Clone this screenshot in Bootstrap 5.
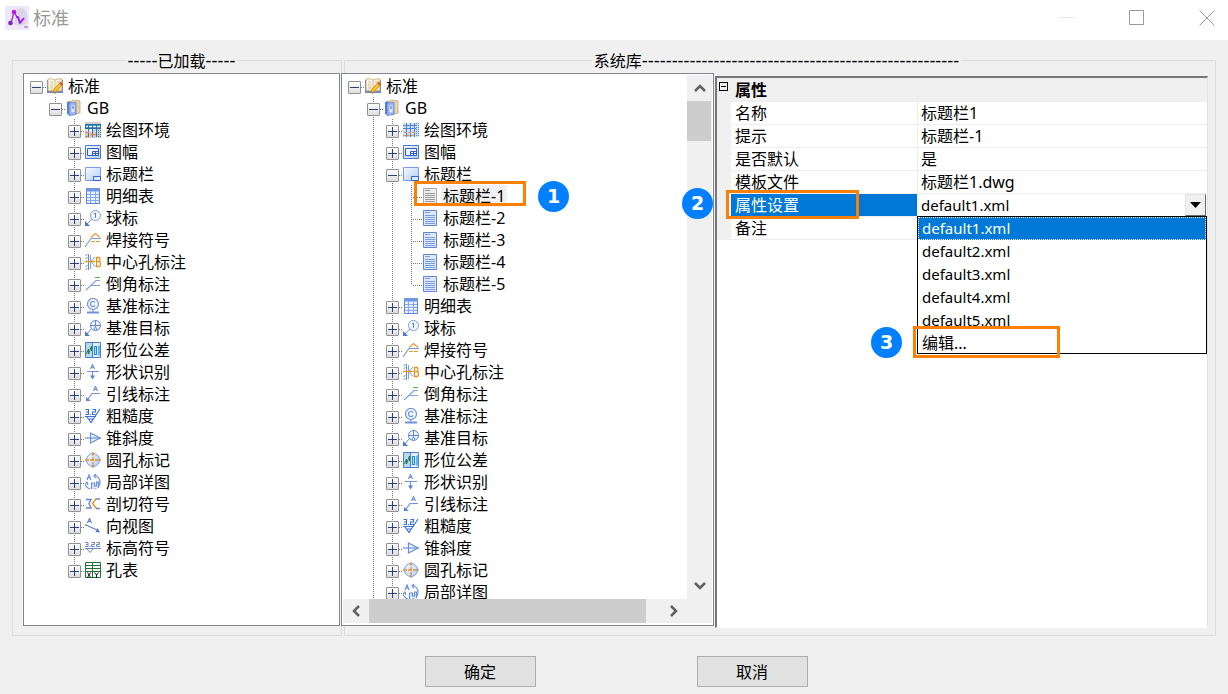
<!DOCTYPE html>
<html lang="zh-CN">
<head>
<meta charset="utf-8">
<meta name="viewport" content="width=device-width, initial-scale=1">
<title>标准</title>
<link href="https://cdn.jsdelivr.net/npm/bootstrap@5.3.0/dist/css/bootstrap.min.css" rel="stylesheet">
<style>
body{background:#f0f0f0;color:#000;font:16px/22px "Noto Sans","Noto Sans CJK SC",sans-serif}
.titlebar{height:40px;padding:0 13px 5px 5px;color:#999;font-size:18px}
.titlebar button,.scroll-btn{background:none;border:0;padding:0}
.titlebar svg,.scroll-btn svg{display:block}
.win-controls{gap:54px}
.stage{padding:8px 12px 0;gap:2px;display:grid;grid-template:minmax(0,1fr) / minmax(0,330fr) minmax(0,872fr)}
.group{border:1px solid #dcdcdc;margin:0}
.group legend{float:none;width:auto;margin:0 auto;padding:2px 2px 0;font-size:16px;line-height:22px;white-space:nowrap}
.dashes{font:18px/22px "Liberation Sans",sans-serif}
.group-loaded{padding:1px 1px 9px 10px}
.group-library{padding:1px 7px 7px 0}
.panes{margin-left:-4px;gap:1px;min-height:0;display:grid;grid-template:minmax(0,1fr) / minmax(0,373fr) minmax(0,493fr)}
.tree-box{background:#fff;border:1px solid #828790}
.library-box{margin-bottom:2px;display:grid;grid-template:minmax(0,1fr) 24px / minmax(0,1fr) 25px;padding:1px 1px 2px 1px}
.tree,.tree ul{list-style:none;margin:0;padding:0}
.tree{padding:1px 0 0 6px;overflow:hidden;min-height:0}
.library-box .tree{padding:0 0 0 5px}
.tree ul{padding-left:19px}
.tree li{position:relative;white-space:nowrap}
.tree ul>li::before{content:"";position:absolute;left:6px;top:0;bottom:0;width:1px;background:repeating-linear-gradient(#777 0 1px,transparent 1px 2px)}
.tree ul>li:last-child:not(.continues)::before{bottom:auto;height:11px}
.node{display:flex;align-items:center;height:22px;position:relative;background:repeating-linear-gradient(90deg,#777 0 1px,transparent 1px 2px) 13px 12px/4px 1px no-repeat}
.node svg{width:16px;height:16px;flex:none;margin-right:3px}
.node span{padding:0 2px}
.leaf{padding-left:17px;background:repeating-linear-gradient(90deg,#777 0 1px,transparent 1px 2px) 8px 12px/9px 1px no-repeat}
.leaf .picked{background:#f0f0f0}
.twist{width:13px;height:13px;flex:none;margin:2px 4px 0 0;padding:0;border:1px solid #919191;border-radius:1px;background:linear-gradient(#27427f,#27427f) center/9px 1px no-repeat,linear-gradient(#fff,#dedede)}
.twist.closed{background:linear-gradient(#27427f,#27427f) center/9px 1px no-repeat,linear-gradient(#27427f,#27427f) center/1px 9px no-repeat,linear-gradient(#fff,#dedede)}
.bar{background:#f0f0f0}
.bar-x{display:flex}.bar-y{display:flex;flex-direction:column}
.scroll-btn{flex:none;width:25px;height:26px;display:grid;place-items:center}
.bar-x .scroll-btn{width:26px;height:24px}
.thumb{background:#cdcdcd}
.bar-x .thumb{width:95%}.bar-y .thumb{height:40px;width:24px}
.props{margin-top:3px;background:#fff;border:2px solid;border-color:#777 #e3e3e3 #fff #777;border-right-width:1px;border-bottom-width:1px}
.props table{width:100%;table-layout:fixed;border-collapse:separate;border-spacing:0}
.props th,.props td{height:23px;line-height:22px;padding:0 0 0 4px;border-bottom:1px solid #eee;font-weight:400;white-space:nowrap;position:relative}
.props td:last-child{padding-left:3px}
.props .gutter{background:#f0f0f0;padding:0}
.props tbody th{border-right:1px solid #eee}
.props thead th{height:24px;background:#f0f0f0;font-weight:700}
.props thead .gutter{vertical-align:top}
.c-gutter{width:14px}.c-name{width:187px}
.mini{display:block;width:9px;height:9px;margin:4px 0 0 2px;padding:0;border:1px solid #000;background:linear-gradient(#000,#000) center/5px 1px no-repeat}
.props .chosen{background:#0078d7;color:#fff}
.combo{display:block;width:100%;height:22px;border:0;padding:0;background:#fff;color:#000;appearance:none;font-size:15px;line-height:22px}
.combo-arrow{position:absolute;right:1px;top:0;width:21px;height:22px;background:#f0f0f0;border:1px solid;border-color:#e3e3e3 #696969 #696969 #e3e3e3;pointer-events:none;display:grid;place-items:center}
.choices{position:absolute;z-index:3;top:22px;left:-1px;right:0;border:1px solid #000;background:#fff}
.choices button{display:block;width:100%;height:23px;border:0;padding:0 0 0 4px;background:none;color:#000;text-align:left;line-height:23px;font-size:15px}
.choices .active{background:#0078d7;color:#fff;outline:1px dotted #fff;outline-offset:-1px}
.choices .edit{height:21px;font-size:16px;position:relative}
.frame{position:absolute;border:3px solid #ff8000;z-index:4;pointer-events:none}
.step{position:absolute;z-index:5;width:31px;height:31px;border-radius:50%;background:#0080ff;color:#fff;font:700 19px/31px "DejaVu Sans",sans-serif;text-align:center}
.frame-1{left:9px;top:-4px;width:112px;height:25px}.step-1{left:133px;top:-4px}
.frame-2{left:-5px;top:-4px;width:133px;height:29px}.step-2{left:-49px;top:-6px}
.frame-3{left:-5px;top:-6px;width:147px;height:32px}.step-3{left:-47px;top:-5px}
.actions{padding:20px 0 7px 4px;gap:161px}
.actions button{width:111px;height:31px;padding:0;border:1px solid #adadad;background:#e1e1e1;color:#000}
</style>
</head>
<body class="vh-100 d-flex flex-column overflow-hidden">
<svg width="0" height="0" class="position-absolute" aria-hidden="true">
<defs>
<linearGradient id="g" x2="1" y2="1"><stop stop-color="#f7faff"/><stop offset="1" stop-color="#b5ccf8"/></linearGradient>
<linearGradient id="gy" x2="1" y2="1"><stop stop-color="#fffdf5"/><stop offset="1" stop-color="#eedcb4"/></linearGradient>
</defs>
<symbol id="book" viewBox="0 0 16 16"><path d="M0 2h16v13H9l-1 1-1-1H0z" fill="#6c86c4"/><path d="M1 1q4-1 7 1 3-2 7-1v12q-4-1-7 1-3-2-7-1z" fill="url(#gy)" stroke="#c3a36a" stroke-width=".8"/><path d="M8 2v11M3 4h3M3 6h3M3 8h3M3 10h3M10 4h3" stroke="#cbb78e" stroke-width=".7"/><path d="M13.500 4l2.500 2-7 7.500-3 1.500.8-3.500z" fill="#ffc524" stroke="#a87400" stroke-width=".7"/><path d="M13.500 4l2.500 2-1.500 1.500-2.400-2z" fill="#d85a3a"/></symbol>
<symbol id="folder" viewBox="0 0 16 16"><path d="M4 1.500L9 0l5 1v12l-4 1z" fill="#e9d6b0" stroke="#b59a6d" stroke-width=".7"/><path d="M1 2l3-1v14l-3-1z" fill="#5b7fdb"/><path d="M3 3l7-.5v12L3 15.500z" fill="#9dbbf4" stroke="#4c71c9" stroke-width=".7"/><path d="M5 5l4-.5v8L5 13z" fill="#dce8ff" stroke="#7f9fe6" stroke-width=".6"/><path d="M7 6v3" stroke="#3a66c8"/></symbol>
<symbol id="env" viewBox="0 0 16 16"><path fill="#cfe0fa" d="M0 1h16v14H0z"/><path d="M0 3.500h13M0 6.500h13M3.500 1v14M7.500 1v14M11.500 1v14" stroke="#5580d8"/><path d="M1 10.500h11M0 13.500h12" stroke="#e39a58" stroke-dasharray="3 1"/><path d="M15.500 1v14M13.500 1v14" stroke="#5582d8" stroke-dasharray="1 1"/></symbol>
<symbol id="env2" viewBox="0 0 16 16"><path fill="#d3d1cf" d="M0 0h16v16H0z"/><path fill="#2070a8" d="M0 2h16v5H0z"/><path d="M1 4.500h2m1 0h3m1 0h3m1 0h3M1 8.500h2m1 0h3" stroke="#fff" stroke-width="1.300"/><path d="M3.500 2v13M7.500 2v13M11.500 2v13" stroke="#2878b0"/><path d="M0 10.500h4M5 12.500h6M0 14.500h3" stroke="#f18358" stroke-width="1.500"/><path d="M13.500 8v8M15.500 8v8" stroke="#2878b0" stroke-dasharray="1 1"/></symbol>
<symbol id="sheet" viewBox="0 0 16 16"><path d="M.5 1.500h15v13H.5z" fill="url(#g)" stroke="#4d78d0"/><path d="M2.500 4.500h11v7h-11z" fill="#edf3ff" stroke="#2f5fc0"/><path d="M7.500 11.500v-4h6M7.500 9.500h6M10.500 7.500v4" stroke="#2f5fc0" fill="none"/></symbol>
<symbol id="titleblk" viewBox="0 0 16 16"><path d="M.5 1.500h15v13H.5z" fill="url(#g)" stroke="#789ce6"/><path d="M8.500 14.500v-4h7v4z" fill="#dce8ff" stroke="#3264c9"/></symbol>
<symbol id="bom" viewBox="0 0 16 16"><path d="M1.500.5h13v15h-13z" fill="#e8f0ff" stroke="#5a83dc"/><path fill="#6f94e6" d="M1 0h14v3.500H1z"/><path d="M2 6.500h12M2 9.500h12M2 12.500h12M5.500 3v12M10.500 3v12" stroke="#89a8ea"/></symbol>
<symbol id="balloon" viewBox="0 0 16 16" fill="none" stroke="#7b9be0"><circle cx="10.500" cy="5.500" r="5" fill="#f4f8ff"/><path d="M9 4l1.500-1v5" stroke="#5b82d4"/><path d="M7 9l-5 5"/><path d="M0 11v5h5z" fill="#4e78cc" stroke="none"/></symbol>
<symbol id="weld" viewBox="0 0 16 16" fill="none" stroke-width="1.200"><path d="M0 15l6-8.500h10" stroke="#7d9de2"/><path d="M6 5.500l4.500-4 4.500 4M6 9.500h4m1 0h4" stroke="#e69b37"/></symbol>
<symbol id="center" viewBox="0 0 16 16" fill="none"><path d="M.5 1.500l2-1m-2 4l2-1m-2 9l2-1m-2 4l2-1M3.500 0v16" stroke="#6489d8"/><path d="M5.500 1v14M10 3L6 7.500l4 5" stroke="#7fa0df"/><path d="M0 7.500h10M11.500 3.500H14q1 0 1 2t-1 2h-2.500H14q1.500 0 1.500 2.500T14 12.500h-2.500z" stroke="#e8931b" stroke-width="1.300"/></symbol>
<symbol id="chamfer" viewBox="0 0 16 16" fill="none"><path d="M1 14L11 4.500h4M6 9.500h9" stroke="#839fe0" stroke-width="1.200"/><path d="M10 1.500h5" stroke="#4fb53c"/></symbol>
<symbol id="datum" viewBox="0 0 16 16" fill="none" stroke="#6f92dc" stroke-width="1.200"><circle cx="8" cy="6" r="5.500" fill="#f1f6ff"/><path d="M10 4.500q-1-1-2-1-2.500 0-2.500 2.500T8 8.500q1 0 2-1M8 12v3"/><path d="M2 14.500h12" stroke-width="2"/></symbol>
<symbol id="target" viewBox="0 0 16 16" fill="none" stroke="#5f86d6"><circle cx="10.500" cy="5.500" r="5" fill="#eef4ff"/><path d="M5.500 5.500h10M10.500 0v5M9 10l1.500-3.500L12 10M6 9l-4 5"/><path d="M0 11v5h5z" fill="#4e78cc" stroke="none"/></symbol>
<symbol id="tol" viewBox="0 0 16 16" fill="none"><path d="M.5.500h15v15H.5z" fill="#e4f0ff" stroke="#4d7fd0"/><path fill="#b5d7ef" d="M1 1h6v14H1z"/><path d="M7.500 1v14" stroke="#4d7fd0"/><path d="M1.500 12l2-5v5l3-8v5" stroke="#257d47"/><path d="M9.500 4.500v8h2v-8zM14 3.500v10" stroke="#168eea" stroke-width="1.200"/></symbol>
<symbol id="shape" viewBox="0 0 16 16" fill="none" stroke="#6f92d8"><path d="M5.500 5L7.500.5l2 4.500M6 3.500h3M2 7.500h12M7.500 8v5" stroke-width="1.200"/><path d="M5 11.500l2.500 4 2.500-4z" fill="#5d84d0" stroke="none"/></symbol>
<symbol id="leader" viewBox="0 0 16 16" fill="none" stroke="#6f92d8"><path d="M8.500 5l2-4.500 2 4.500M9 3.500h3M15 7.500H7L3 13" stroke-width="1.200"/><path d="M1 11v4h5z" fill="#5d84d0" stroke="none"/></symbol>
<symbol id="rough" viewBox="0 0 16 16" fill="none" stroke="#356fd3" stroke-width="1.100"><path d="M.5 1.500h3v5h-3M1 4h2.500M5.500 6v1M7.500 1.500h3V4h-3v2.500h3M0 8.500h11M2 9l4 5.500L15 1M4 11h4"/></symbol>
<symbol id="taper" viewBox="0 0 16 16" fill="none" stroke="#6b90dc" stroke-width="1.200"><path d="M5.500 3v10L15 8z" fill="#eef4ff"/><path d="M0 8h16"/></symbol>
<symbol id="hole" viewBox="0 0 16 16" fill="none"><circle cx="8" cy="8" r="6.500" fill="url(#g)" stroke="#7799df"/><path d="M8 0v16M0 8h16" stroke="#ec9324" stroke-width="1.300" stroke-dasharray="4 1"/></symbol>
<symbol id="detail" viewBox="0 0 16 16" fill="none" stroke="#6b90d8" stroke-width="1.200"><path d="M2 6l2-5 2 5M3 4h2M9 1q6 2 6 7t-6 7M0 9q0 4 5 6M11 0L9 2l2 2M0 10l2-2 1 3"/><path d="M6.500 15V9h3v3h2V8h2v6" fill="#d9e7ff"/></symbol>
<symbol id="section" viewBox="0 0 16 16" fill="none" stroke-width="1.400"><path d="M1 3.500h5L4 7.500l2 4.500H1" stroke="#6188cf"/><path d="M11 2.500L7.500 7.500l4 5" stroke="#e89227"/><path d="M11 3h4M11 12.500h4" stroke="#6188cf"/></symbol>
<symbol id="view" viewBox="0 0 16 16" fill="none" stroke="#5d84cc" stroke-width="1.200"><path d="M2.500 5l2-4.500 2 4.500M3 3.500h3M0 6.500l12 5.500"/><path d="M10.500 14l2-4 2.500 4.500z" fill="#5079c4" stroke="none"/></symbol>
<symbol id="level" viewBox="0 0 16 16" fill="none" stroke="#6c86c6"><path d="M0 2.500h3v4H0m1-2h2M5 6v1M6.500 2.500h3v2h-3v2h3M11.500 2.500h3v2h-3v2H15M0 8.500h16M2 9l3 3.500L8 9"/></symbol>
<symbol id="holetab" viewBox="0 0 16 16" fill="none"><path d="M.5.500h15v15H.5zM0 3.500h16M0 6.500h16M0 9.500h16M7.500 0v16" stroke="#1d7335"/><path d="M2.500 10.500l3 5m0-5l-3 5M9.500 10.500l2 2.500 2-2.500m-2 2v3" stroke="#000" stroke-width=".9"/></symbol>
<symbol id="page" viewBox="0 0 16 16"><path d="M1.500.5h13v15h-13z" fill="#dce8ff" stroke="#6085d6"/><path d="M3 2.500h5M3 5.500h10M3 7.500h10M3 9.500h10M3 11.500h10M3 13.500h10" stroke="#7d9ce0"/></symbol>
<symbol id="pagegray" viewBox="0 0 16 16"><path d="M1.500.5h13v15h-13z" fill="#eee" stroke="#aaa"/><path d="M3 2.500h5M3 5.500h10M3 7.500h10M3 9.500h10M3 11.500h10M3 13.500h10" stroke="#999"/></symbol>
</svg>

<header class="titlebar bg-white d-flex align-items-center justify-content-between flex-shrink-0">
  <div class="d-flex align-items-center">
    <svg class="me-1" width="24" height="24" viewBox="0 0 24 24" aria-hidden="true"><rect width="24" height="24" fill="#ece8f7"/><path d="M12 3q8-3 10 5v9q-7 5-13 0z" fill="#d9d6ec"/><path d="M9 6L6 17M9 6l3 5" stroke="#a321cf" stroke-width="1.300"/><circle cx="9" cy="6" r="2.300" fill="#b11fdc"/><circle cx="5.500" cy="17" r="2.300" fill="#7e24c3"/><path d="M11 11h2l2 6 4-5" fill="none" stroke="#a11be0" stroke-width="2" stroke-linejoin="round"/><path d="M19 21h4" stroke="#c57ee0" stroke-width="1.500"/></svg>
    <span>标准</span>
  </div>
  <div class="win-controls d-flex">
    <button type="button" aria-label="最小化"><svg width="16" height="16"><path d="M0 7.500h16" stroke="#e6e6e6"/></svg></button>
    <button type="button" aria-label="最大化"><svg width="16" height="16"><path d="M.5.500h14v14H.5z" fill="none" stroke="#999"/></svg></button>
    <button type="button" aria-label="关闭"><svg width="16" height="16"><path d="M.5.500l15 15m0-15l-15 15" stroke="#999"/></svg></button>
  </div>
</header>

<main class="stage flex-fill overflow-hidden">
  <fieldset class="group group-loaded d-flex flex-column">
    <legend><span class="dashes">-----</span>已加载<span class="dashes">-----</span></legend>
    <div class="tree-box flex-fill overflow-hidden">
      <ul class="tree">
        <li><div class="node"><button class="twist" aria-label="折叠"></button><svg><use href="#book"/></svg><span>标准</span></div>
        <ul><li><div class="node"><button class="twist" aria-label="折叠"></button><svg><use href="#folder"/></svg><span>GB</span></div>
        <ul>
          <li><div class="node"><button class="twist closed" aria-label="展开"></button><svg><use href="#env2"/></svg><span>绘图环境</span></div></li>
          <li><div class="node"><button class="twist closed" aria-label="展开"></button><svg><use href="#sheet"/></svg><span>图幅</span></div></li>
          <li><div class="node"><button class="twist closed" aria-label="展开"></button><svg><use href="#titleblk"/></svg><span>标题栏</span></div></li>
          <li><div class="node"><button class="twist closed" aria-label="展开"></button><svg><use href="#bom"/></svg><span>明细表</span></div></li>
          <li><div class="node"><button class="twist closed" aria-label="展开"></button><svg><use href="#balloon"/></svg><span>球标</span></div></li>
          <li><div class="node"><button class="twist closed" aria-label="展开"></button><svg><use href="#weld"/></svg><span>焊接符号</span></div></li>
          <li><div class="node"><button class="twist closed" aria-label="展开"></button><svg><use href="#center"/></svg><span>中心孔标注</span></div></li>
          <li><div class="node"><button class="twist closed" aria-label="展开"></button><svg><use href="#chamfer"/></svg><span>倒角标注</span></div></li>
          <li><div class="node"><button class="twist closed" aria-label="展开"></button><svg><use href="#datum"/></svg><span>基准标注</span></div></li>
          <li><div class="node"><button class="twist closed" aria-label="展开"></button><svg><use href="#target"/></svg><span>基准目标</span></div></li>
          <li><div class="node"><button class="twist closed" aria-label="展开"></button><svg><use href="#tol"/></svg><span>形位公差</span></div></li>
          <li><div class="node"><button class="twist closed" aria-label="展开"></button><svg><use href="#shape"/></svg><span>形状识别</span></div></li>
          <li><div class="node"><button class="twist closed" aria-label="展开"></button><svg><use href="#leader"/></svg><span>引线标注</span></div></li>
          <li><div class="node"><button class="twist closed" aria-label="展开"></button><svg><use href="#rough"/></svg><span>粗糙度</span></div></li>
          <li><div class="node"><button class="twist closed" aria-label="展开"></button><svg><use href="#taper"/></svg><span>锥斜度</span></div></li>
          <li><div class="node"><button class="twist closed" aria-label="展开"></button><svg><use href="#hole"/></svg><span>圆孔标记</span></div></li>
          <li><div class="node"><button class="twist closed" aria-label="展开"></button><svg><use href="#detail"/></svg><span>局部详图</span></div></li>
          <li><div class="node"><button class="twist closed" aria-label="展开"></button><svg><use href="#section"/></svg><span>剖切符号</span></div></li>
          <li><div class="node"><button class="twist closed" aria-label="展开"></button><svg><use href="#view"/></svg><span>向视图</span></div></li>
          <li><div class="node"><button class="twist closed" aria-label="展开"></button><svg><use href="#level"/></svg><span>标高符号</span></div></li>
          <li><div class="node"><button class="twist closed" aria-label="展开"></button><svg><use href="#holetab"/></svg><span>孔表</span></div></li>
        </ul></li></ul></li>
      </ul>
    </div>
  </fieldset>

  <fieldset class="group group-library d-flex flex-column">
    <legend>系统库<span class="dashes">-----------------------------------------------------</span></legend>
    <div class="panes flex-fill">
      <div class="tree-box library-box">
        <ul class="tree">
          <li><div class="node"><button class="twist" aria-label="折叠"></button><svg><use href="#book"/></svg><span>标准</span></div>
          <ul><li class="continues"><div class="node"><button class="twist" aria-label="折叠"></button><svg><use href="#folder"/></svg><span>GB</span></div>
          <ul>
            <li><div class="node"><button class="twist closed" aria-label="展开"></button><svg><use href="#env"/></svg><span>绘图环境</span></div></li>
            <li><div class="node"><button class="twist closed" aria-label="展开"></button><svg><use href="#sheet"/></svg><span>图幅</span></div></li>
            <li><div class="node"><button class="twist" aria-label="折叠"></button><svg><use href="#titleblk"/></svg><span>标题栏</span></div>
            <ul>
              <li><div class="node leaf"><svg><use href="#pagegray"/></svg><span class="picked">标题栏-1</span><i class="frame frame-1"></i><b class="step step-1">1</b></div></li>
              <li><div class="node leaf"><svg><use href="#page"/></svg><span>标题栏-2</span></div></li>
              <li><div class="node leaf"><svg><use href="#page"/></svg><span>标题栏-3</span></div></li>
              <li><div class="node leaf"><svg><use href="#page"/></svg><span>标题栏-4</span></div></li>
              <li><div class="node leaf"><svg><use href="#page"/></svg><span>标题栏-5</span></div></li>
            </ul></li>
            <li><div class="node"><button class="twist closed" aria-label="展开"></button><svg><use href="#bom"/></svg><span>明细表</span></div></li>
            <li><div class="node"><button class="twist closed" aria-label="展开"></button><svg><use href="#balloon"/></svg><span>球标</span></div></li>
            <li><div class="node"><button class="twist closed" aria-label="展开"></button><svg><use href="#weld"/></svg><span>焊接符号</span></div></li>
            <li><div class="node"><button class="twist closed" aria-label="展开"></button><svg><use href="#center"/></svg><span>中心孔标注</span></div></li>
            <li><div class="node"><button class="twist closed" aria-label="展开"></button><svg><use href="#chamfer"/></svg><span>倒角标注</span></div></li>
            <li><div class="node"><button class="twist closed" aria-label="展开"></button><svg><use href="#datum"/></svg><span>基准标注</span></div></li>
            <li><div class="node"><button class="twist closed" aria-label="展开"></button><svg><use href="#target"/></svg><span>基准目标</span></div></li>
            <li><div class="node"><button class="twist closed" aria-label="展开"></button><svg><use href="#tol"/></svg><span>形位公差</span></div></li>
            <li><div class="node"><button class="twist closed" aria-label="展开"></button><svg><use href="#shape"/></svg><span>形状识别</span></div></li>
            <li><div class="node"><button class="twist closed" aria-label="展开"></button><svg><use href="#leader"/></svg><span>引线标注</span></div></li>
            <li><div class="node"><button class="twist closed" aria-label="展开"></button><svg><use href="#rough"/></svg><span>粗糙度</span></div></li>
            <li><div class="node"><button class="twist closed" aria-label="展开"></button><svg><use href="#taper"/></svg><span>锥斜度</span></div></li>
            <li><div class="node"><button class="twist closed" aria-label="展开"></button><svg><use href="#hole"/></svg><span>圆孔标记</span></div></li>
            <li><div class="node"><button class="twist closed" aria-label="展开"></button><svg><use href="#detail"/></svg><span>局部详图</span></div></li>
          </ul></li></ul></li>
        </ul>
        <div class="bar bar-y">
          <button class="scroll-btn" aria-label="向上滚动"><svg width="14" height="10"><path d="M2 8l5-5 5 5" fill="none" stroke="#606060" stroke-width="2.500"/></svg></button>
          <div class="flex-fill"><div class="thumb"></div></div>
          <button class="scroll-btn" aria-label="向下滚动"><svg width="14" height="10"><path d="M2 2l5 5 5-5" fill="none" stroke="#606060" stroke-width="2.500"/></svg></button>
        </div>
        <div class="bar bar-x">
          <button class="scroll-btn" aria-label="向左滚动"><svg width="10" height="14"><path d="M8 2L3 7l5 5" fill="none" stroke="#606060" stroke-width="2.500"/></svg></button>
          <div class="flex-fill d-flex"><div class="thumb"></div></div>
          <button class="scroll-btn" aria-label="向右滚动"><svg width="10" height="14"><path d="M2 2l5 5-5 5" fill="none" stroke="#606060" stroke-width="2.500"/></svg></button>
        </div>
        <div class="bar"></div>
      </div>

      <div class="props">
        <table>
          <colgroup><col class="c-gutter"><col class="c-name"><col></colgroup>
          <thead><tr><th class="gutter"><button class="mini" aria-label="折叠"></button></th><th colspan="2" scope="colgroup">属性</th></tr></thead>
          <tbody>
            <tr><td class="gutter"></td><th scope="row">名称</th><td>标题栏1</td></tr>
            <tr><td class="gutter"></td><th scope="row">提示</th><td>标题栏-1</td></tr>
            <tr><td class="gutter"></td><th scope="row">是否默认</th><td>是</td></tr>
            <tr><td class="gutter"></td><th scope="row">模板文件</th><td>标题栏1.dwg</td></tr>
            <tr><td class="gutter"></td><th scope="row" class="chosen"><label for="cfg">属性设置</label><i class="frame frame-2"></i><b class="step step-2">2</b></th>
              <td><select id="cfg" class="combo"><option>default1.xml</option><option>default2.xml</option><option>default3.xml</option><option>default4.xml</option><option>default5.xml</option></select>
                <span class="combo-arrow"><svg width="11" height="6"><path d="M0 0h11L5.500 6z"/></svg></span>
                <div class="choices">
                  <button type="button" class="active">default1.xml</button>
                  <button type="button">default2.xml</button>
                  <button type="button">default3.xml</button>
                  <button type="button">default4.xml</button>
                  <button type="button">default5.xml</button>
                  <button type="button" class="edit">编辑...<i class="frame frame-3"></i><b class="step step-3">3</b></button>
                </div></td></tr>
            <tr><td class="gutter"></td><th scope="row">备注</th><td></td></tr>
          </tbody>
        </table>
      </div>
    </div>
  </fieldset>
</main>

<footer class="actions d-flex justify-content-center flex-shrink-0">
  <button type="button">确定</button>
  <button type="button">取消</button>
</footer>
<script src="https://cdn.jsdelivr.net/npm/bootstrap@5.3.0/dist/js/bootstrap.bundle.min.js"></script>
</body>
</html>
